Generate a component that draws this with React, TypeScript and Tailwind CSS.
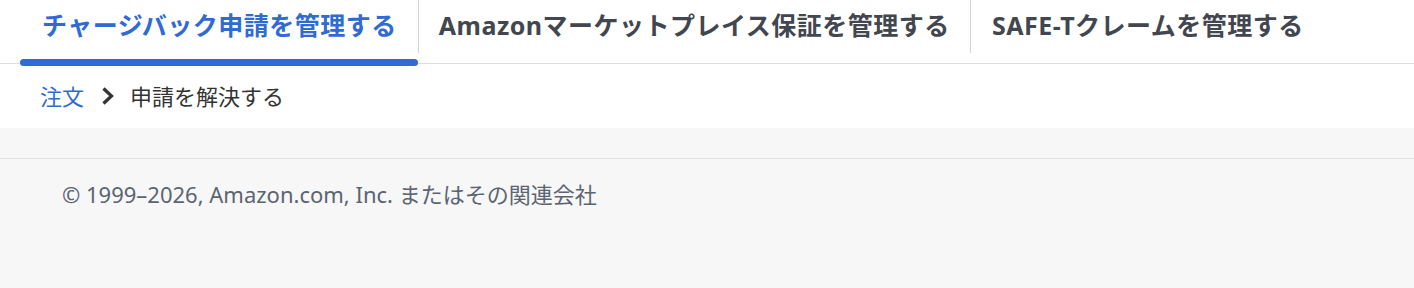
import React from "react";

const font = { fontFamily: '"Noto Sans", "Noto Sans CJK JP", sans-serif' };

export default function App() {
  return (
    <div className="w-[1414px] h-[288px] bg-[#f7f7f7] flex flex-col" style={font}>
      <div className="bg-white">
        <div className="relative h-[64px] flex items-stretch border-b border-[#dddddd] pl-[20px]">
          <div className="relative flex items-center pl-[22px] pr-[21px] pb-[12px]">
            <span className="text-[25px] font-bold text-[#2f6bd3] tracking-[0.5px]">チャージバック申請を管理する</span>
            <div className="absolute left-0 right-0 top-[59px] h-[7px] rounded-full bg-[#2f6bd6]" />
          </div>
          <div className="w-px h-[53px] bg-[#d5d5d5]" />
          <div className="flex items-center pl-[20px] pr-[20px] pb-[12px]">
            <span className="text-[25px] font-bold text-[#41464f] tracking-[0.5px]">Amazonマーケットプレイス保証を管理する</span>
          </div>
          <div className="w-px h-[53px] bg-[#d5d5d5]" />
          <div className="flex items-center pl-[21px] pr-[21px] pb-[12px]">
            <span className="text-[25px] font-bold text-[#41464f] tracking-[0.5px]">SAFE-Tクレームを管理する</span>
          </div>
        </div>
        <div className="h-[64px] flex items-center pl-[40px] text-[22px]">
          <span className="text-[#2f6bd3]">注文</span>
          <svg className="ml-[16px] mr-[14px]" width="16" height="20" viewBox="0 0 16 20">
            <path d="M3.5 2.5 L11.5 10 L3.5 17.5" fill="none" stroke="#333" strokeWidth="3.2" />
          </svg>
          <span className="text-[#333333]">申請を解決する</span>
        </div>
      </div>
      <div className="h-[30px]" />
      <div className="border-t border-[#e3e3e3] pl-[62px] pt-[19px] text-[22px] text-[#5b6472]">
        © 1999–2026, Amazon.com, Inc. またはその関連会社
      </div>
    </div>
  );
}
